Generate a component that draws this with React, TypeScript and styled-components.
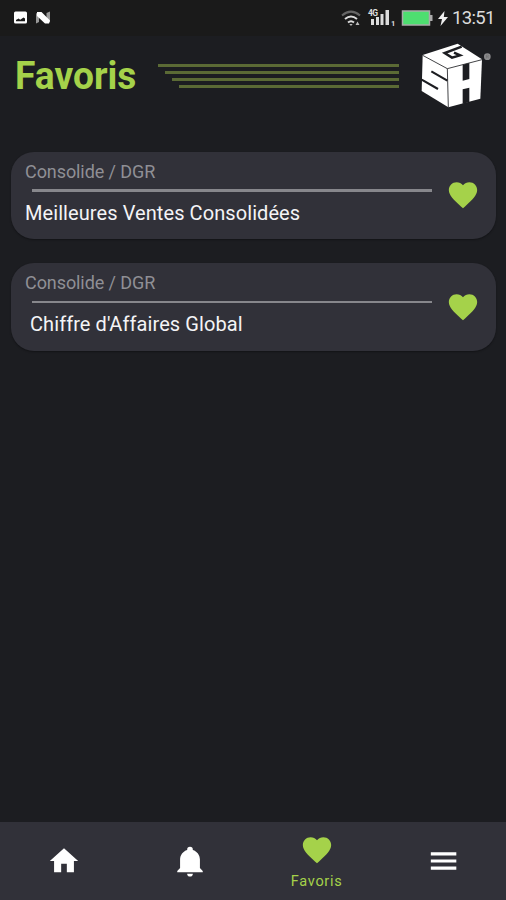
import React from "react";
import styled, { createGlobalStyle } from "styled-components";

const green = "#a5d24a";

const GlobalStyle = createGlobalStyle`
  body { margin: 0; background: #1c1d21; }
  * { box-sizing: border-box; }
`;

const Screen = styled.div`
  width: 506px;
  height: 900px;
  display: flex;
  flex-direction: column;
  overflow: hidden;
  background: #1c1d21;
  color: #f4f4f6;
  font-family: Roboto, "Liberation Sans", sans-serif;
`;

const StatusBar = styled.div`
  height: 36px;
  flex: none;
  display: flex;
  align-items: center;
  justify-content: space-between;
  padding: 0 11px 0 13px;
  background: #1a1a1a;
`;

const StatusGroup = styled.div`
  display: flex;
  align-items: center;
`;

const Clock = styled.time`
  margin-left: 4px;
  width: 43px;
  font-size: 18.5px;
  line-height: 36px;
  letter-spacing: -0.65px;
  color: #dcdcdc;
  white-space: nowrap;
`;

const Header = styled.header`
  height: 115.5px;
  flex: none;
  display: flex;
  align-items: flex-start;
  padding: 6px 12px 0 15px;
`;

const Title = styled.h1`
  margin: 11px 0 0;
  width: 143px;
  font-size: 38.5px;
  font-weight: 700;
  line-height: 46px;
  color: ${green};
  transform: scaleX(0.965);
  transform-origin: left;
`;

const Stripes = styled.div`
  width: 241px;
  margin-top: 22px;
  display: flex;
  flex-direction: column;
  align-items: flex-end;
  gap: 4px;
`;

const Stripe = styled.div<{ $width: number }>`
  width: ${(p) => p.$width}px;
  height: 3px;
  background: #5b6a35;
`;

const Logo = styled.svg`
  margin-left: 21px;
  flex: none;
`;

const List = styled.main`
  flex: 1;
  display: flex;
  flex-direction: column;
  gap: 24px;
  padding: 0 10px 0 11px;
`;

const Card = styled.article`
  height: 87.5px;
  display: flex;
  justify-content: space-between;
  padding-left: 14px;
  padding-right: 16.5px;
  border-radius: 23px;
  background: #313139;
  box-shadow: 0 1px 2px rgba(0, 0, 0, 0.35);
`;

const CardText = styled.div`
  width: 407px;
  padding-top: 9px;
`;

const Category = styled.div`
  font-size: 18px;
  line-height: 22px;
  letter-spacing: -0.08px;
  color: #8f8f95;
  white-space: nowrap;
`;

const Rule = styled.div<{ $thickness: number }>`
  height: ${(p) => p.$thickness}px;
  margin: 6.5px 0 0 7px;
  background: #87878c;
`;

const CardTitle = styled.div<{ $indent: number }>`
  margin-top: 8.4px;
  padding-left: ${(p) => p.$indent}px;
  font-size: 20px;
  line-height: 26px;
  letter-spacing: 0.08px;
  white-space: nowrap;
`;

const CardHeart = styled.div`
  height: 34px;
  margin-top: 26.5px;
  color: ${green};
`;

const NavBar = styled.nav`
  height: 78.5px;
  flex: none;
  display: grid;
  grid-template-columns: repeat(4, 1fr);
  padding-left: 1px;
  background: #313139;
`;

const NavItem = styled.a<{ $active?: boolean }>`
  display: flex;
  flex-direction: column;
  align-items: center;
  padding-top: ${(p) => (p.$active ? 11 : 22.5)}px;
  color: ${(p) => (p.$active ? green : "#fff")};
`;

const NavLabel = styled.span`
  margin-top: 6px;
  font-size: 14.5px;
  line-height: 18px;
  letter-spacing: 0.7px;
`;

const paths = {
  heart:
    "M12 21.35l-1.45-1.32C5.4 15.36 2 12.27 2 8.5 2 5.41 4.42 3 7.5 3c1.74 0 3.41.81 4.5 2.08C13.09 3.81 14.76 3 16.5 3 19.58 3 22 5.41 22 8.5c0 3.77-3.4 6.86-8.55 11.53z",
  home: "M10 20v-6h4v6h5v-8h3L12 3 2 12h3v8z",
  bell: "M21 19v1H3v-1l2-2v-6c0-3.1 2.03-5.83 5-6.71V4a2 2 0 0 1 4 0v.29c2.97.88 5 3.61 5 6.71v6l2 2m-7 2a2 2 0 0 1-4 0z",
  menu: "M3.400 5.900h18v2.200h-18zM3.400 10.900h18v2.200h-18zM3.400 15.900h18v2.200h-18z",
};

const Glyph = styled.svg`
  display: block;
  flex: none;
  fill: currentColor;
`;

function Icon({ name }: { name: keyof typeof paths }) {
  return (
    <Glyph width="34" height="34" viewBox="0 0 24 24">
      <path d={paths[name]} />
    </Glyph>
  );
}

function Cube() {
  return (
    <Logo width="72" height="66" viewBox="0 0 216 198">
      <g transform="translate(-30 -18)">
        <path d="M143 23 216 70 211 188 115 214 35 165 38 57z" fill="#fff" />
        <g fill="none" stroke="#1c1d21">
          <path d="M38 58 112 98 216 71M112 98 115 214" strokeWidth="2.5" />
          <path d="M155 32 104 51 126 65 150 58 132 50" strokeWidth="7.5" />
          <path d="M64 106 112 134M35 131 84 159" strokeWidth="6.5" />
        </g>
        <path d="M158 86 178 81V129L158 134zM158 160 178 155V198L158 204z" fill="#1c1d21" />
        <circle cx="232" cy="62" r="10" fill="#8b8b8d" />
        <path d="M229 67v-10h4a2.5 2.5 0 0 1 0 5h-4m4 0 3 5" fill="none" stroke="#666" strokeWidth="1.5" />
      </g>
    </Logo>
  );
}

function Notifications() {
  return (
    <svg width="40" height="16" viewBox="0 0 40 16">
      <path fillRule="evenodd" fill="#fff" d="M2.500 1.500h10a1.500 1.500 0 0 1 1.500 1.500v9a1.500 1.500 0 0 1-1.500 1.500h-10a1.500 1.500 0 0 1-1.500-1.500v-9a1.500 1.500 0 0 1 1.500-1.500zM3 11.200h9V8.500L10.500 7.500 7.200 9.700 5.600 8.600 3 10z" />
      <path fill="#999" d="M23 3.500 26 2v10l-3 1.500zM33.500 3 37 1.500V12l-3.500 1z" />
      <path fill="#fff" d="M24 2h4.500l8.500 8.500-1 3h-4L24 6z" />
    </svg>
  );
}

function SystemIcons() {
  return (
    <svg width="107" height="22" viewBox="0 0 107 22">
      <g fill="none">
        <path d="M1 8.500Q10 .8 19 8.500" stroke="#666" strokeWidth="2" />
        <path d="M4 12Q10 7 16 12" stroke="#ddd" strokeWidth="2" />
        <path d="M7 15.500Q10 13 13 15.500" stroke="#ddd" strokeWidth="2" />
      </g>
      <path d="M8.300 17h3.400L10 19zM16.500 14.500l2 3.500h-4z" fill="#bbb" />
      <path d="M30 12h3v6h-3zM35 10h3V18h-3zM39.500 7h3v11h-3zM44.500 3H48v15h-3.500z" fill="#ddd" />
      <text x="27" y="9" fontSize="8.500" fontWeight="700" letterSpacing="-.7" fill="#ddd">4G</text>
      <text x="50" y="19" fontSize="7.500" fontWeight="700" fill="#ddd">1</text>
      <rect x="61.500" y="4" width="27" height="14" fill="#4ede70" stroke="#aaa" strokeWidth="1.500" />
      <path d="M89 8h2.500v6H89z" fill="#aaa" />
      <path d="M103.500 4 97 12h4l-1.500 7L107 10h-4.200z" fill="#eee" />
    </svg>
  );
}

const favorites = [
  { category: "Consolide / DGR", title: "Meilleures Ventes Consolidées", indent: 0, rule: 2.5 },
  { category: "Consolide / DGR", title: "Chiffre d'Affaires Global", indent: 5, rule: 2 },
];

export default function App() {
  return (
    <Screen>
      <GlobalStyle />
      <StatusBar>
        <StatusGroup>
          <Notifications />
        </StatusGroup>
        <StatusGroup>
          <SystemIcons />
          <Clock>13:51</Clock>
        </StatusGroup>
      </StatusBar>
      <Header>
        <Title>Favoris</Title>
        <Stripes>
          {[241, 234, 227, 220].map((w) => (
            <Stripe key={w} $width={w} />
          ))}
        </Stripes>
        <Cube />
      </Header>
      <List>
        {favorites.map((f) => (
          <Card key={f.title}>
            <CardText>
              <Category>{f.category}</Category>
              <Rule $thickness={f.rule} />
              <CardTitle $indent={f.indent}>{f.title}</CardTitle>
            </CardText>
            <CardHeart>
              <Icon name="heart" />
            </CardHeart>
          </Card>
        ))}
      </List>
      <NavBar>
        <NavItem>
          <Icon name="home" />
        </NavItem>
        <NavItem>
          <Icon name="bell" />
        </NavItem>
        <NavItem $active>
          <Icon name="heart" />
          <NavLabel>Favoris</NavLabel>
        </NavItem>
        <NavItem>
          <Icon name="menu" />
        </NavItem>
      </NavBar>
    </Screen>
  );
}
